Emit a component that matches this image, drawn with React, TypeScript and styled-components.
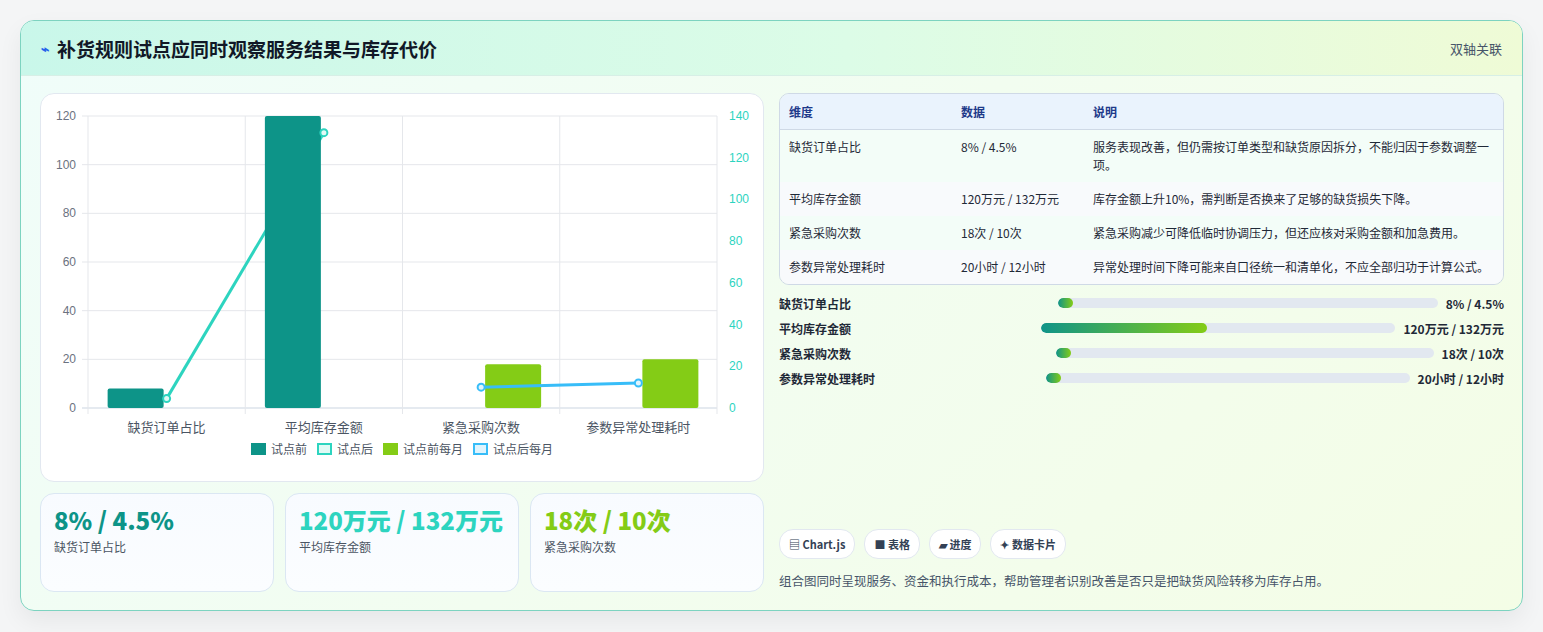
import styled, { createGlobalStyle } from "styled-components";

const GlobalStyle = createGlobalStyle`
  html, body { margin: 0; background: #f4f5f6; }
  body { font-family: "Noto Sans CJK SC", "Noto Sans", sans-serif; color: #1f2937; }
  * { box-sizing: border-box; }
`;

const rows = [
  { name: "缺货订单占比", data: "8% / 4.5%", note: "服务表现改善，但仍需按订单类型和缺货原因拆分，不能归因于参数调整一项。" },
  { name: "平均库存金额", data: "120万元 / 132万元", note: "库存金额上升10%，需判断是否换来了足够的缺货损失下降。" },
  { name: "紧急采购次数", data: "18次 / 10次", note: "紧急采购减少可降低临时协调压力，但还应核对采购金额和加急费用。" },
  { name: "参数异常处理耗时", data: "20小时 / 12小时", note: "异常处理时间下降可能来自口径统一和清单化，不应全部归功于计算公式。" },
];

const progress = [
  { name: "缺货订单占比", value: "8% / 4.5%", pct: 4 },
  { name: "平均库存金额", value: "120万元 / 132万元", pct: 47 },
  { name: "紧急采购次数", value: "18次 / 10次", pct: 4 },
  { name: "参数异常处理耗时", value: "20小时 / 12小时", pct: 4 },
];

const App = () => (
  <>
    <GlobalStyle />
    <Page>
      <Card>
        <Header>
          <Title><Bolt>⌁</Bolt>补货规则试点应同时观察服务结果与库存代价</Title>
          <Tag>双轴关联</Tag>
        </Header>
        <Body>
          <LeftCol>
            <ChartBox>
              <Chart />
              <Legend>
                <LegendItem><Swatch $fill="#0d9488" $line="#0d9488" />试点前</LegendItem>
                <LegendItem><Swatch $fill="#e0faf5" $line="#2dd4bf" />试点后</LegendItem>
                <LegendItem><Swatch $fill="#84cc16" $line="#84cc16" />试点前每月</LegendItem>
                <LegendItem><Swatch $fill="#e0f4fd" $line="#38bdf8" />试点后每月</LegendItem>
              </Legend>
            </ChartBox>
            <Kpis>
              <Kpi><KpiValue $color="#0d9488">8% / 4.5%</KpiValue><KpiLabel>缺货订单占比</KpiLabel></Kpi>
              <Kpi><KpiValue $color="#2dd4bf">120万元 / 132万元</KpiValue><KpiLabel>平均库存金额</KpiLabel></Kpi>
              <Kpi><KpiValue $color="#84cc16">18次 / 10次</KpiValue><KpiLabel>紧急采购次数</KpiLabel></Kpi>
            </Kpis>
          </LeftCol>
          <RightCol>
            <Table>
              <thead>
                <tr><Th style={{ width: 172 }}>维度</Th><Th style={{ width: 132 }}>数据</Th><Th>说明</Th></tr>
              </thead>
              <tbody>
                {rows.map((r, i) => (
                  <Tr key={r.name} $alt={i % 2 === 1}>
                    <Td>{r.name}</Td><Td>{r.data}</Td><Td>{r.note}</Td>
                  </Tr>
                ))}
              </tbody>
            </Table>
            <Bars>
              {progress.map((p) => (
                <BarRow key={p.name}>
                  <BarLabel>{p.name}</BarLabel>
                  <Track><Fill style={{ width: `${p.pct}%` }} /></Track>
                  <BarValue>{p.value}</BarValue>
                </BarRow>
              ))}
            </Bars>
            <Spacer />
            <Chips>
              <Chip>▤ Chart.js</Chip>
              <Chip>■ 表格</Chip>
              <Chip>▰ 进度</Chip>
              <Chip>✦ 数据卡片</Chip>
            </Chips>
            <Foot>组合图同时呈现服务、资金和执行成本，帮助管理者识别改善是否只是把缺货风险转移为库存占用。</Foot>
          </RightCol>
        </Body>
      </Card>
    </Page>
  </>
);
export default App;

const Chart = () => {
  const L = 47, R = 676, T = 22, B = 314;
  const h = B - T;
  const yL = (v: number) => B - (v / 120) * h;
  const yR = (v: number) => B - (v / 140) * h;
  const cw = (R - L) / 4;
  const cx = (i: number) => L + cw * i + cw / 2;
  const cats = ["缺货订单占比", "平均库存金额", "紧急采购次数", "参数异常处理耗时"];
  const bars = [
    { i: 0, off: -59, v: 8, c: "#0d9488" },
    { i: 1, off: -59, v: 120, c: "#0d9488" },
    { i: 2, off: 4, v: 18, c: "#84cc16" },
    { i: 3, off: 4, v: 20, c: "#84cc16" },
  ];
  return (
    <svg width="722" height="342" style={{ display: "block" }} fontFamily="'Liberation Sans', 'Noto Sans CJK SC', sans-serif">
      {[0, 20, 40, 60, 80, 100, 120].map((v) => (
        <g key={v}>
          <line x1={L - 6} x2={R} y1={yL(v)} y2={yL(v)} stroke={v === 0 ? "#cbd5e1" : "#e5e7eb"} />
          <text x={L - 12} y={yL(v) + 4} textAnchor="end" fontSize="12" fill="#6b7280">{v}</text>
        </g>
      ))}
      {[0, 20, 40, 60, 80, 100, 120, 140].map((v) => (
        <text key={v} x={R + 12} y={yR(v) + 4} fontSize="12" fill="#2dd4bf">{v}</text>
      ))}
      {[0, 1, 2, 3, 4].map((i) => (
        <line key={i} x1={L + cw * i} x2={L + cw * i} y1={T} y2={B + 6} stroke="#e5e7eb" />
      ))}
      <polyline points={`${cx(0)},${yR(4.5)} ${cx(1)},${yR(132)}`} fill="none" stroke="#2dd4bf" strokeWidth="3" />
      {bars.map((b) => (
        <rect key={b.i} x={cx(b.i) + b.off} y={yL(b.v)} width={56} height={B - yL(b.v)} rx="2" fill={b.c} />
      ))}
      <circle cx={cx(0)} cy={yR(4.5)} r="3.5" fill="#e0faf5" stroke="#2dd4bf" strokeWidth="2" />
      <circle cx={cx(1)} cy={yR(132)} r="3.5" fill="#e0faf5" stroke="#2dd4bf" strokeWidth="2" />
      <polyline points={`${cx(2)},${yR(10)} ${cx(3)},${yR(12)}`} fill="none" stroke="#38bdf8" strokeWidth="3" />
      <circle cx={cx(2)} cy={yR(10)} r="3.5" fill="#e0f4fd" stroke="#38bdf8" strokeWidth="2" />
      <circle cx={cx(3)} cy={yR(12)} r="3.5" fill="#e0f4fd" stroke="#38bdf8" strokeWidth="2" />
      {cats.map((c, i) => (
        <text key={c} x={cx(i)} y={B + 24} textAnchor="middle" fontSize="13" fill="#4b5563" fontFamily="'Noto Sans CJK SC', sans-serif">{c}</text>
      ))}
    </svg>
  );
};

const Page = styled.div`
  padding: 20px 20px 22px 20px;
`;

const Card = styled.div`
  width: 1503px;
  height: 591px;
  border: 1px solid #7dd3c0;
  border-radius: 14px;
  overflow: hidden;
  background: linear-gradient(135deg, #f0fdfa 0%, #f4fde6 100%);
  box-shadow: 0 10px 24px rgba(0, 0, 0, 0.06);
  display: flex;
  flex-direction: column;
`;

const Header = styled.div`
  height: 55px;
  padding: 0 20px;
  display: flex;
  align-items: center;
  justify-content: space-between;
  background: linear-gradient(90deg, #c9f7ea 0%, #dcfce7 55%, #effbd6 100%);
  border-bottom: 1px solid #d7efe6;
`;

const Title = styled.h1`
  margin: 0;
  font-size: 19px;
  font-weight: 700;
  color: #111827;
  display: flex;
  align-items: center;
  gap: 8px;
`;

const Bolt = styled.span`
  color: #2563eb;
  font-size: 14px;
`;

const Tag = styled.span`
  font-size: 13px;
  color: #475569;
`;

const Body = styled.div`
  flex: 1;
  display: grid;
  grid-template-columns: 724px 725px;
  gap: 15px;
  padding: 17px 19px 18px 19px;
`;

const LeftCol = styled.div`
  display: flex;
  flex-direction: column;
  gap: 11px;
`;

const ChartBox = styled.div`
  height: 389px;
  background: #fff;
  border: 1px solid #e2e8f0;
  border-radius: 14px;
  padding: 0 0 0 0;
`;

const Legend = styled.div`
  display: flex;
  justify-content: center;
  gap: 10px;
  margin-top: 4px;
`;

const LegendItem = styled.span`
  display: flex;
  align-items: center;
  gap: 5px;
  font-size: 12px;
  color: #4b5563;
`;

const Swatch = styled.span<{ $fill: string; $line: string }>`
  width: 15px;
  height: 12px;
  background: ${(p) => p.$fill};
  border: 2px solid ${(p) => p.$line};
`;

const Kpis = styled.div`
  display: grid;
  grid-template-columns: repeat(3, 1fr);
  gap: 11px;
  flex: 1;
`;

const Kpi = styled.div`
  background: linear-gradient(180deg, #f8fbff 0%, #fbfdff 100%);
  border: 1px solid #dbe7f3;
  border-radius: 14px;
  padding: 12px 13px;
`;

const KpiValue = styled.div<{ $color: string }>`
  font-size: 24px;
  font-weight: 800;
  line-height: 28px;
  color: ${(p) => p.$color};
`;

const KpiLabel = styled.div`
  font-size: 12px;
  color: #4b5563;
  margin-top: 4px;
`;

const RightCol = styled.div`
  display: flex;
  flex-direction: column;
`;

const Table = styled.table`
  width: 100%;
  border-collapse: separate;
  border-spacing: 0;
  border: 1px solid #cfd9e6;
  border-radius: 10px;
  overflow: hidden;
  font-size: 12px;
`;

const Th = styled.th`
  text-align: left;
  font-weight: 700;
  color: #1e3a8a;
  background: #eaf3fd;
  padding: 9px 9px;
  border-bottom: 1px solid #cfd9e6;
`;

const Tr = styled.tr<{ $alt: boolean }>`
  background: ${(p) => (p.$alt ? "#f8fafc" : "#f3fdf8")};
  & + & td { border-top: 1px solid #e2e8f0; }
`;

const Td = styled.td`
  padding: 8px 9px;
  color: #1f2937;
  line-height: 18px;
  vertical-align: top;
`;

const Bars = styled.div`
  display: flex;
  flex-direction: column;
  gap: 7px;
  margin-top: 9px;
`;

const BarRow = styled.div`
  display: grid;
  grid-template-columns: 1fr 1.4fr auto;
  align-items: center;
  gap: 8px;
  height: 18px;
`;

const BarLabel = styled.span`
  font-size: 12px;
  font-weight: 600;
  color: #1f2937;
`;

const Track = styled.div`
  height: 10px;
  border-radius: 5px;
  background: #e2e8f0;
  overflow: hidden;
`;

const Fill = styled.div`
  height: 100%;
  min-width: 14px;
  border-radius: 5px;
  background: linear-gradient(90deg, #0f9488, #84cc16);
`;

const BarValue = styled.span`
  font-size: 12px;
  font-weight: 700;
  color: #1f2937;
`;

const Spacer = styled.div`
  flex: 1;
`;

const Chips = styled.div`
  display: flex;
  gap: 9px;
`;

const Chip = styled.span`
  font-size: 11px;
  font-weight: 700;
  color: #334155;
  background: #fff;
  border: 1px solid #e2e8f0;
  border-radius: 14px;
  padding: 6px 9px;
`;

const Foot = styled.p`
  margin: 12px 0 2px;
  font-size: 12.5px;
  color: #475569;
`;
